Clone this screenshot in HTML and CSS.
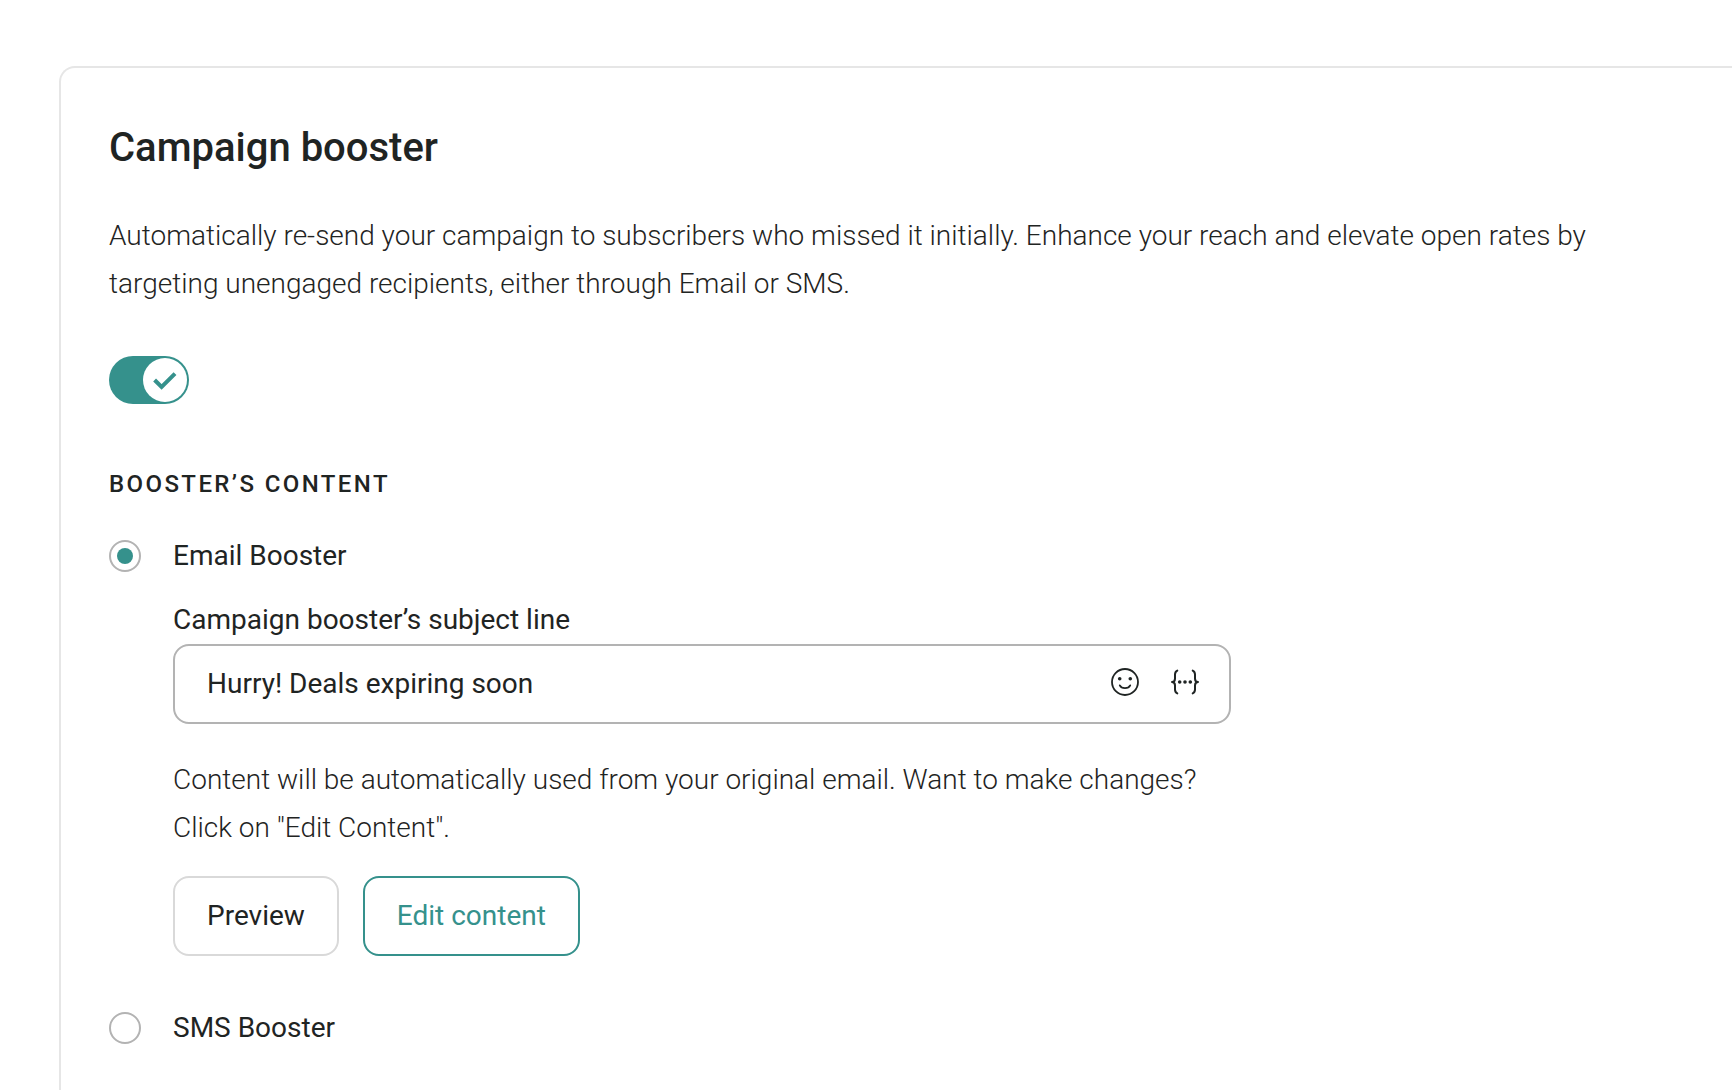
FILE: index.html
```html
<!DOCTYPE html>
<html lang="en">
<head>
    <meta charset="UTF-8">
    <meta name="viewport" content="width=device-width, initial-scale=1.0">
    <title>Campaign booster</title>
    <link rel="stylesheet" href="styles.css">
</head>
<body>
    <main class="card">
        <h1>Campaign booster</h1>
        <p class="intro">Automatically re-send your campaign to subscribers who missed it initially. Enhance your reach and elevate open rates by targeting unengaged recipients, either through Email or SMS.</p>

        <label class="toggle">
            <input type="checkbox" aria-label="Enable campaign booster" checked>
            <svg viewBox="0 0 80 48" aria-hidden="true">
                <circle cx="56" cy="24" r="22" fill="#fff"/>
                <path d="M45.6 24 L52.6 31 L66 17.6" fill="none" stroke="#35918c" stroke-width="4"/>
            </svg>
        </label>

        <h2>BOOSTER’S CONTENT</h2>

        <div class="option">
            <input type="radio" name="booster" id="emailBooster" checked>
            <label for="emailBooster">Email Booster</label>
        </div>

        <div class="option-body">
            <label for="subject">Campaign booster’s subject line</label>
            <div class="field">
                <input type="text" id="subject" value="Hurry! Deals expiring soon">
                <div class="field-icons">
                    <button type="button" aria-label="Insert emoji">
                        <svg viewBox="0 0 28 28" fill="none" stroke="#1f2423" stroke-width="1.8" stroke-linecap="round">
                            <circle cx="14" cy="14" r="13"/>
                            <path d="M8.8 17.4 C10.6 21 17.4 21 19.2 17.4"/>
                            <g fill="#1f2423" stroke="none">
                                <circle cx="8.7" cy="10.7" r="1.8"/>
                                <circle cx="19.3" cy="10.7" r="1.8"/>
                            </g>
                        </svg>
                    </button>
                    <button type="button" aria-label="Insert variable">
                        <svg viewBox="0 0 28 28" fill="none" stroke="#1f2423" stroke-width="2" stroke-linecap="round" stroke-linejoin="round">
                            <path d="M6.3 2.6 C4.5 3.4 4 4.6 4 6.5 V10.5 C4 12.6 3 14 1 14 C3 14 4 15.4 4 17.5 V21.5 C4 23.4 4.5 24.6 6.3 25.4"/>
                            <path d="M21.7 2.6 C23.5 3.4 24 4.6 24 6.5 V10.5 C24 12.6 25 14 27 14 C25 14 24 15.4 24 17.5 V21.5 C24 23.4 23.5 24.6 21.7 25.4"/>
                            <g fill="#1f2423" stroke="none">
                                <circle cx="8.7" cy="14" r="1.8"/>
                                <circle cx="14" cy="14" r="1.8"/>
                                <circle cx="19.3" cy="14" r="1.8"/>
                            </g>
                        </svg>
                    </button>
                </div>
            </div>
            <p class="hint">Content will be automatically used from your original email. Want to make changes? Click on "Edit Content".</p>
            <div class="actions">
                <button type="button" class="btn">Preview</button>
                <button type="button" class="btn btn-primary">Edit content</button>
            </div>
        </div>

        <div class="option">
            <input type="radio" name="booster" id="smsBooster">
            <label for="smsBooster">SMS Booster</label>
        </div>
    </main>
</body>
</html>
```
FILE: styles.css
```css
* {
    box-sizing: border-box;
}

body {
    margin: 0;
    padding: 66px 0 0 59px;
    min-height: 100vh;
    display: flex;
    background-color: #fff;
    color: #1f2423;
    font-family: Roboto, "Liberation Sans", sans-serif;
    font-size: 28px;
    line-height: 48px;
}

h1, h2, p {
    margin: 0;
}

input, button {
    font: inherit;
    color: inherit;
    margin: 0;
}

/* the card runs off the right and bottom edges */
.card {
    flex: 1;
    padding: 48px 48px 0;
    border: 2px solid #e6e6e6;
    border-right: none;
    border-bottom: none;
    border-top-left-radius: 16px;
}

h1 {
    font-size: 40px;
    font-weight: 500;
    line-height: 64px;
}

h2 {
    margin: 64px 0 32px;
    font-size: 24px;
    font-weight: 500;
    line-height: 32px;
    letter-spacing: 0.1em;
}

.intro {
    max-width: 1520px;
    margin: 32px 0 48px;
    font-weight: 300;
}

.toggle {
    display: grid;
    width: 80px;
    height: 48px;
    cursor: pointer;
}

.toggle input, .toggle svg {
    grid-area: 1 / 1;
    width: 80px;
    height: 48px;
}

.toggle input {
    appearance: none;
    border-radius: 24px;
    background-color: #35918c;
}

.option {
    display: flex;
    align-items: center;
    gap: 32px;
}

.option input {
    appearance: none;
    display: grid;
    place-items: center;
    width: 32px;
    height: 32px;
    border: 2px solid #b3b3b3;
    border-radius: 50%;
}

.option input:checked::before {
    content: "";
    width: 16px;
    height: 16px;
    border-radius: 50%;
    background-color: #35918c;
}

.option-body {
    max-width: 1122px;
    margin: 16px 0 48px;
    padding-left: 64px;
}

.field {
    display: flex;
    align-items: center;
    height: 80px;
    padding: 0 30px 0 32px;
    border: 2px solid #b3b3b3;
    border-radius: 16px;
}

.field input {
    flex: 1;
    min-width: 0;
    padding: 0;
    border: none;
    outline: none;
    background: none;
}

.field-icons {
    display: flex;
    gap: 32px;
    padding-bottom: 4px;
}

.field-icons button {
    width: 28px;
    height: 28px;
    padding: 0;
    border: none;
    background: none;
    cursor: pointer;
}

.field-icons svg {
    display: block;
}

.hint {
    margin: 32px 0 24px;
    font-weight: 300;
}

.actions {
    display: flex;
    gap: 24px;
}

.btn {
    height: 80px;
    padding: 0 32px;
    border: 2px solid #d9d9d9;
    border-radius: 16px;
    background-color: #fff;
    cursor: pointer;
}

.btn-primary {
    border-color: #35918c;
    color: #35918c;
}
```
